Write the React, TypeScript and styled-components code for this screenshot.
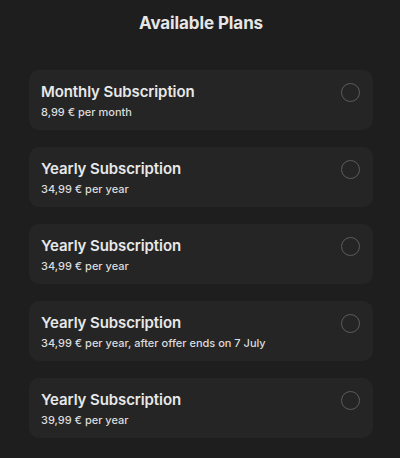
import React from "react";
import styled, { createGlobalStyle } from "styled-components";

const Global = createGlobalStyle`
  html, body { margin: 0; padding: 0; background: #1e1e1e; }
  body { font-family: Inter, "Noto Sans", sans-serif; -webkit-font-smoothing: antialiased; }
`;

const Page = styled.div`
  width: 400px;
  height: 458px;
  background: #1e1e1e;
  display: flex;
  flex-direction: column;
  align-items: center;
  box-sizing: border-box;
  padding-top: 12px;
  overflow: hidden;
`;

const Heading = styled.h1`
  margin: 0 0 0 2px;
  font-size: 17px;
  line-height: 22px;
  font-weight: 700;
  color: #e6e6e6;
  letter-spacing: -0.1px;
`;

const List = styled.div`
  margin: 36px 0 0 2px;
  width: 344px;
  display: flex;
  flex-direction: column;
  gap: 17px;
`;

const Card = styled.div`
  height: 60px;
  box-sizing: border-box;
  background: #252525;
  border-radius: 10px;
  padding: 12px 13px 0 12px;
  display: flex;
  justify-content: space-between;
  align-items: flex-start;
`;

const Info = styled.div`
  display: flex;
  flex-direction: column;
`;

const Title = styled.div`
  font-size: 15px;
  line-height: 20px;
  font-weight: 600;
  color: #e8e8e8;
  letter-spacing: -0.1px;
`;

const Price = styled.div`
  margin-top: 3px;
  font-size: 11px;
  line-height: 15px;
  font-weight: 500;
  color: #dcdcdc;
`;

const Radio = styled.div`
  margin-top: 1px;
  width: 17px;
  height: 17px;
  border-radius: 50%;
  border: 1.5px solid #5c5c5c;
`;

const plans = [
  { title: "Monthly Subscription", price: "8,99 € per month" },
  { title: "Yearly Subscription", price: "34,99 € per year" },
  { title: "Yearly Subscription", price: "34,99 € per year" },
  { title: "Yearly Subscription", price: "34,99 € per year, after offer ends on 7 July" },
  { title: "Yearly Subscription", price: "39,99 € per year" },
];

export default function App() {
  return (
    <>
      <Global />
      <Page>
        <Heading>Available Plans</Heading>
        <List>
          {plans.map((p, i) => (
            <Card key={i}>
              <Info>
                <Title>{p.title}</Title>
                <Price>{p.price}</Price>
              </Info>
              <Radio />
            </Card>
          ))}
        </List>
      </Page>
    </>
  );
}
